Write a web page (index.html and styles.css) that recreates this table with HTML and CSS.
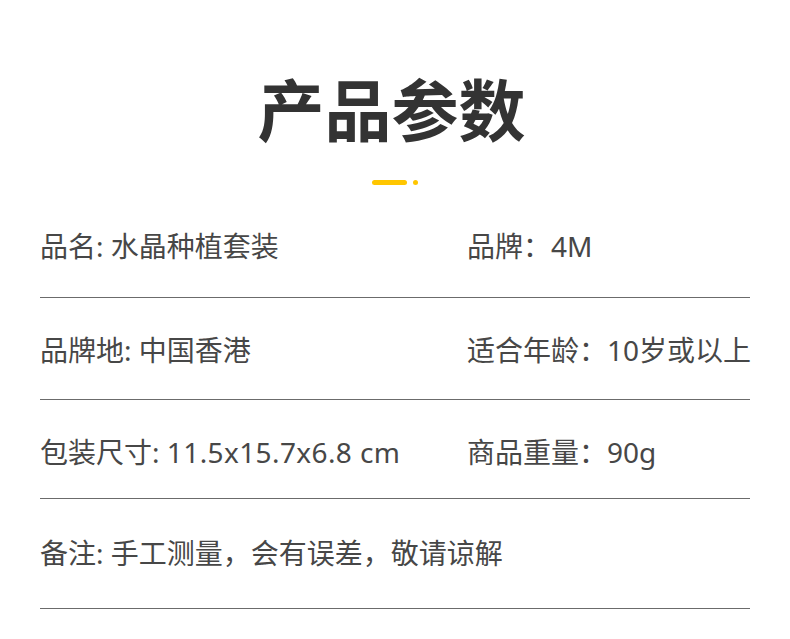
FILE: index.html
```html
<!DOCTYPE html>
<html lang="zh-CN">
<head>
    <meta charset="UTF-8">
    <meta name="viewport" content="width=device-width, initial-scale=1.0">
    <title>产品参数</title>
    <link rel="stylesheet" href="styles.css">
</head>
<body>
    <!-- 标题 -->
    <header class="params-header">
        <h1 class="params-title">产品参数</h1>
        <div class="title-mark">
            <span class="mark-bar"></span>
            <span class="mark-dot"></span>
        </div>
    </header>

    <!-- 参数列表 -->
    <section class="params-list">
        <div class="param-row">
            <div class="param-cell">品名: 水晶种植套装</div>
            <div class="param-cell">品牌：4M</div>
        </div>
        <div class="param-row">
            <div class="param-cell">品牌地: 中国香港</div>
            <div class="param-cell">适合年龄：10岁或以上</div>
        </div>
        <div class="param-row">
            <div class="param-cell">包装尺寸: <span class="param-num">11.5x15.7x6.8 cm</span></div>
            <div class="param-cell">商品重量：90g</div>
        </div>
        <div class="param-row">
            <div class="param-cell">备注: 手工测量，会有误差，敬请谅解</div>
        </div>
    </section>
</body>
</html>
```

FILE: styles.css
```css
:root {
    --text: #474747;
    --title: #333333;
    --line: #6b6b6b;
    --yellow: #ffc600;
}

body {
    margin: 0;
    background: #ffffff;
    font-family: "Noto Sans", "Noto Sans CJK SC", sans-serif;
    color: var(--text);
}

/* 标题 */
.params-header {
    display: flex;
    flex-direction: column;
    align-items: center;
    padding-top: 67px;
}

.params-title {
    margin: 0 7px 0 0;
    font-family: "Noto Sans CJK SC", sans-serif;
    font-size: 67px;
    line-height: 80px;
    font-weight: 700;
    color: var(--title);
}

.title-mark {
    display: flex;
    align-items: center;
    gap: 6px;
    margin-top: 33px;
}

.mark-bar {
    width: 35px;
    height: 5px;
    border-radius: 3px;
    background: var(--yellow);
}

.mark-dot {
    width: 5px;
    height: 5px;
    border-radius: 50%;
    background: var(--yellow);
}

/* 参数列表 */
.params-list {
    margin: 9px 40px 0;
}

.param-row {
    display: grid;
    grid-template-columns: 427px 1fr;
    padding: 32px 0 31px;
    border-bottom: 1px solid var(--line);
    font-size: 28px;
    line-height: 40px;
}

.param-row:nth-child(2) {
    padding-bottom: 29px;
}

.param-row:nth-child(3) {
    padding-bottom: 26px;
}

.param-row:nth-child(4) {
    padding: 34px 0 35px;
}

.param-cell {
    white-space: nowrap;
}

.param-num {
    letter-spacing: 0.4px;
}
```
